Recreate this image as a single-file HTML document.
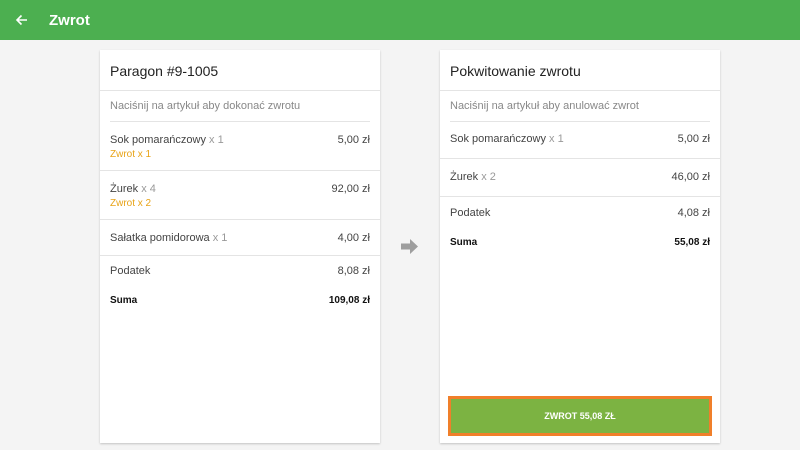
<!DOCTYPE html>
<html><head><meta charset="utf-8"><style>
*{margin:0;padding:0;box-sizing:border-box}
body{width:800px;height:450px;background:#f4f4f4;font-family:"Liberation Sans",sans-serif;position:relative;overflow:hidden}
.hdr{position:absolute;left:0;top:0;width:800px;height:40px;background:#4caf50}
.hdr .t{position:absolute;left:49px;top:12px;color:#fff;font-size:15px;font-weight:bold}
.card{position:absolute;top:50px;width:280px;height:393px;background:#fff;box-shadow:0 1px 2px rgba(0,0,0,.2)}
.a{position:absolute;font-size:11px;color:#444;white-space:nowrap}
.r{right:10px}
.g{color:#999}
.o{color:#e8a317;font-size:10px}
.hl{position:absolute;height:1px;background:#e4e4e4}
.b{font-weight:bold;color:#111;font-size:10px}
</style></head><body>
<div class="hdr">
<svg style="position:absolute;left:15px;top:13px" width="14" height="14" viewBox="0 0 14 14"><path d="M12 7H2M6.5 2.5L2 7l4.5 4.5" stroke="#fff" stroke-width="1.6" fill="none"/></svg>
<div class="t">Zwrot</div></div>

<div class="card" style="left:100px">
<div class="a" style="left:10px;top:13px;font-size:14px;color:#222">Paragon #9-1005</div>
<div class="hl" style="left:0;right:0;top:40px"></div>
<div class="a g" style="left:10px;top:50px;color:#888">Naciśnij na artykuł aby dokonać zwrotu</div>
<div class="hl" style="left:10px;right:10px;top:71px"></div>
<div class="a" style="left:10px;top:84px">Sok pomarańczowy <span class="g">x 1</span></div>
<div class="a r" style="top:84px">5,00 zł</div>
<div class="a o" style="left:10px;top:99px">Zwrot x 1</div>
<div class="hl" style="left:0;right:0;top:120px"></div>
<div class="a" style="left:10px;top:133px">Żurek <span class="g">x 4</span></div>
<div class="a r" style="top:133px">92,00 zł</div>
<div class="a o" style="left:10px;top:148px">Zwrot x 2</div>
<div class="hl" style="left:0;right:0;top:169px"></div>
<div class="a" style="left:10px;top:182px">Sałatka pomidorowa <span class="g">x 1</span></div>
<div class="a r" style="top:182px">4,00 zł</div>
<div class="hl" style="left:0;right:0;top:205px"></div>
<div class="a" style="left:10px;top:215px">Podatek</div>
<div class="a r" style="top:215px">8,08 zł</div>
<div class="a b" style="left:10px;top:245px">Suma</div>
<div class="a r b" style="top:245px">109,08 zł</div>
</div>

<svg style="position:absolute;left:401px;top:239px" width="17" height="15" viewBox="0 0 17 15"><path d="M0 4.5h9V0l8 7.5-8 7.5v-4.5H0z" fill="#9e9e9e"/></svg>

<div class="card" style="left:440px">
<div class="a" style="left:10px;top:13px;font-size:14px;color:#222">Pokwitowanie zwrotu</div>
<div class="hl" style="left:0;right:0;top:40px"></div>
<div class="a" style="left:10px;top:50px;color:#888">Naciśnij na artykuł aby anulować zwrot</div>
<div class="hl" style="left:10px;right:10px;top:71px"></div>
<div class="a" style="left:10px;top:83px">Sok pomarańczowy <span class="g">x 1</span></div>
<div class="a r" style="top:83px">5,00 zł</div>
<div class="hl" style="left:0;right:0;top:108px"></div>
<div class="a" style="left:10px;top:121px">Żurek <span class="g">x 2</span></div>
<div class="a r" style="top:121px">46,00 zł</div>
<div class="hl" style="left:0;right:0;top:146px"></div>
<div class="a" style="left:10px;top:157px">Podatek</div>
<div class="a r" style="top:157px">4,08 zł</div>
<div class="a b" style="left:10px;top:187px">Suma</div>
<div class="a r b" style="top:187px">55,08 zł</div>
<div style="position:absolute;left:8px;top:346px;width:264px;height:40px;border:3px solid #f07f2a;background:#7cb342;color:#fff;font-size:9px;font-weight:bold;text-align:center;line-height:34px">ZWROT 55,08 ZŁ</div>
</div>
</body></html>
